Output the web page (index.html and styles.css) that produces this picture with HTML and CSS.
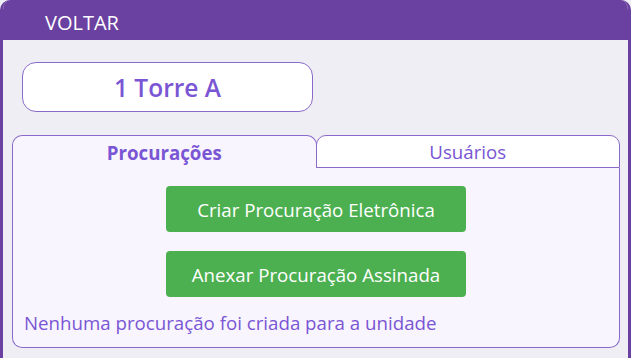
FILE: index.html
```html
<!DOCTYPE html>
<html lang="pt-BR">
<head>
    <meta charset="UTF-8">
    <meta name="viewport" content="width=device-width, initial-scale=1.0">
    <title>Procurações</title>
    <link rel="stylesheet" href="styles.css">
</head>
<body>
    <div class="panel">
        <div class="panel-header">VOLTAR</div>
        <div class="panel-body">
            <div class="unit-name">1 Torre A</div>
            <div class="tabs">
                <div class="tab-row">
                    <div class="tab active">Procurações</div>
                    <div class="tab">Usuários</div>
                </div>
                <div class="tab-content">
                    <button class="btn green">Criar Procuração Eletrônica</button>
                    <button class="btn green">Anexar Procuração Assinada</button>
                    <p class="empty-msg">Nenhuma procuração foi criada para a unidade</p>
                </div>
            </div>
        </div>
    </div>
</body>
</html>
```

FILE: styles.css
```css
body {
    margin: 0;
    font-family: "Open Sans", "Noto Sans", sans-serif;
    background: #efeef5;
}

.panel {
    height: 358px;
    border-left: 3px solid #6a41a0;
    border-right: 3px solid #6a41a0;
    border-radius: 10px 10px 0 0;
    background: #efeef5;
    box-sizing: border-box;
    overflow: hidden;
}

.panel-header {
    height: 40px;
    line-height: 45px;
    padding-left: 42px;
    background: #6a41a0;
    color: #fff;
    font-size: 20px;
}

.panel-body {
    padding: 22px 8px 0 9px;
}

.unit-name {
    width: 291px;
    height: 50px;
    margin-left: 10px;
    box-sizing: border-box;
    border: 1px solid #8a6ac8;
    border-radius: 14px;
    background: #fff;
    color: #7a55d4;
    font-size: 24.5px;
    font-weight: 600;
    display: flex;
    justify-content: center;
    align-items: center;
}

.tabs {
    margin-top: 23px;
}

.tab-row {
    display: flex;
}

.tab {
    flex: 1;
    height: 33px;
    box-sizing: border-box;
    border: 1px solid #8a6ac8;
    border-radius: 10px 10px 0 0;
    background: #fff;
    color: #7a55d4;
    font-size: 18.7px;
    display: flex;
    justify-content: center;
    align-items: center;
}

.tab + .tab {
    margin-left: -1px;
}

.tab.active {
    border-bottom: none;
    background: #f8f5fe;
    font-weight: 700;
}

.tab-content {
    height: 180px;
    box-sizing: border-box;
    border: 1px solid #8a6ac8;
    border-top: none;
    border-radius: 0 0 10px 10px;
    background: #f8f5fe;
    padding-top: 18px;
    display: flex;
    flex-direction: column;
    align-items: center;
    gap: 19px;
}

.btn {
    width: 300px;
    height: 46px;
    border: none;
    border-radius: 4px;
    color: #fff;
    font-family: inherit;
    font-size: 18.7px;
    cursor: pointer;
}

.btn.green {
    background: #4caf50;
}

.empty-msg {
    align-self: flex-start;
    margin: -6px 0 0 11px;
    color: #7a55d4;
    font-size: 18.7px;
}
```
